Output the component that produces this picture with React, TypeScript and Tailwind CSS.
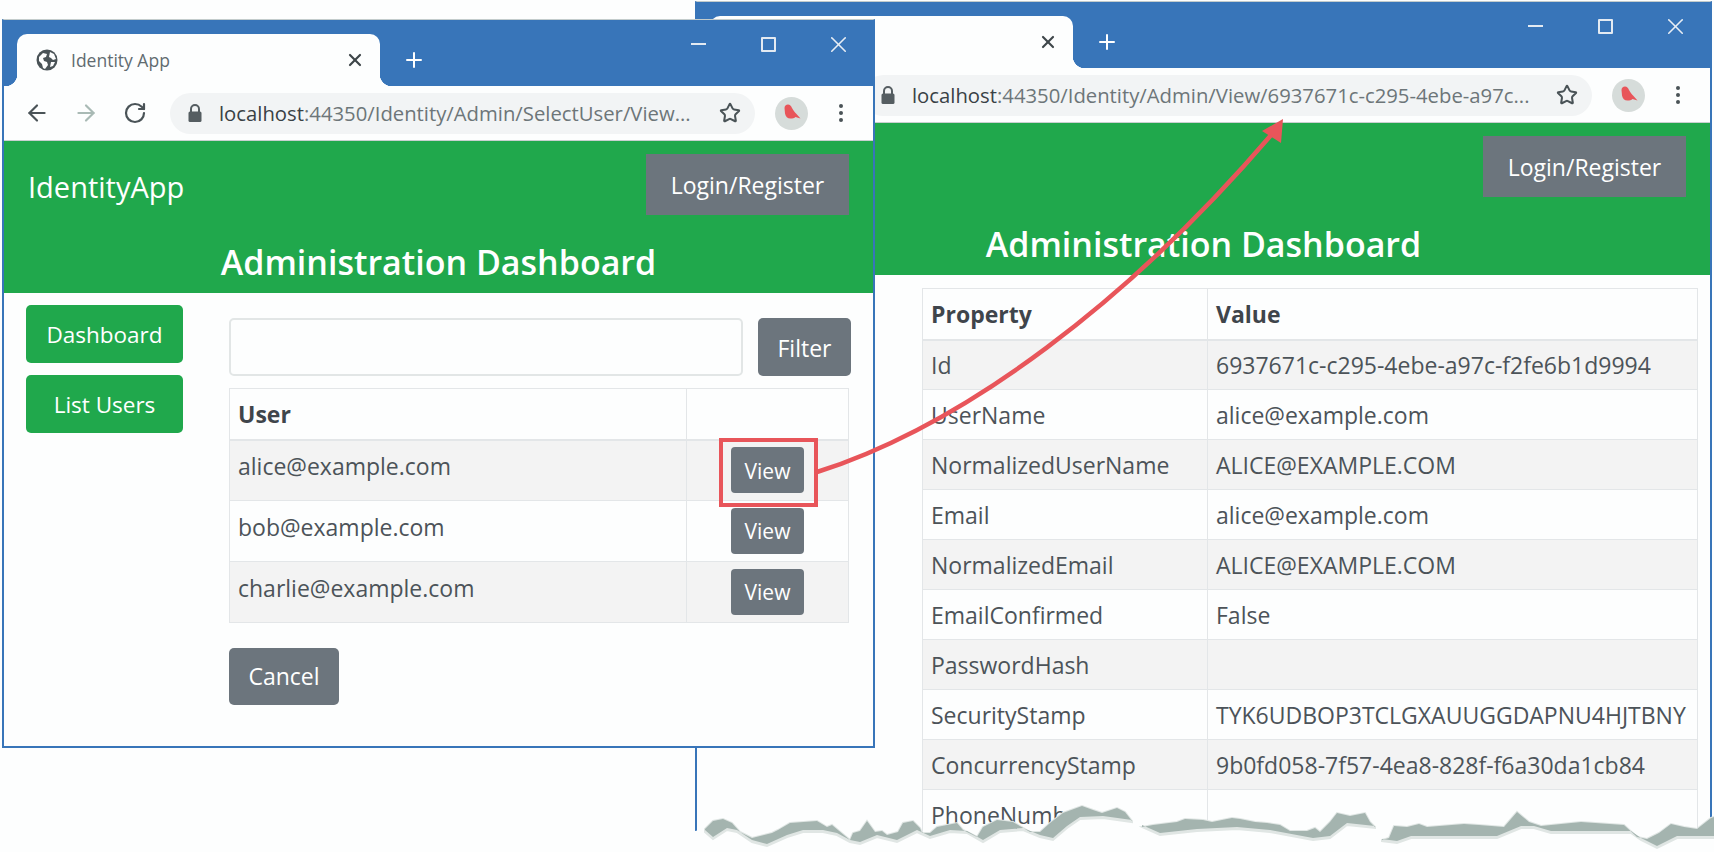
import type { ReactNode } from "react";
import { ArrowLeft, ArrowRight, Plus, RotateCw, Star, X } from "lucide-react";

type Pt = [number, number];

const tornTopA: Pt[] = [[705, 829], [713, 821], [723, 819], [732, 823], [740, 832], [752, 838], [772, 833], [778, 830], [790, 823], [817, 821], [827, 827], [832, 825], [838, 830], [850, 840], [853, 833], [860, 831], [867, 821], [875, 832], [882, 831], [887, 835], [898, 832], [903, 823], [913, 821], [920, 828], [922, 833], [930, 833], [937, 827], [957, 823], [963, 830], [977, 837], [983, 827], [997, 820], [1013, 822], [1030, 832], [1040, 832], [1050, 823], [1063, 813], [1082, 806], [1093, 810], [1102, 813], [1117, 808], [1125, 812], [1132, 821]];
const tornBottomA: Pt[] = [[705, 832], [713, 839], [727, 830], [737, 832], [752, 842], [767, 846], [787, 837], [803, 832], [823, 832], [837, 835], [850, 842], [860, 844], [877, 837], [897, 842], [917, 832], [930, 838], [950, 832], [967, 833], [983, 842], [1000, 832], [1023, 830], [1040, 837], [1053, 840], [1067, 828], [1080, 819], [1103, 818], [1132, 822]];
const tornTopB: Pt[] = [[1142, 827], [1153, 825], [1177, 822], [1185, 819], [1203, 820], [1212, 822], [1232, 818], [1240, 819], [1255, 822], [1267, 823], [1280, 825], [1290, 831], [1307, 831], [1315, 828], [1320, 832], [1330, 822], [1337, 813], [1350, 816], [1365, 813], [1370, 822], [1375, 827]];
const tornBottomB: Pt[] = [[1142, 827], [1160, 835], [1197, 831], [1237, 829], [1270, 832], [1313, 840], [1330, 838], [1347, 825], [1375, 828]];
const tornTopC: Pt[] = [[1382, 840], [1389, 838], [1394, 826], [1407, 827], [1419, 824], [1427, 827], [1464, 824], [1479, 825], [1504, 827], [1517, 812], [1529, 822], [1541, 826], [1581, 822], [1624, 825], [1637, 837], [1647, 839], [1659, 833], [1671, 824], [1684, 827], [1697, 829], [1711, 818], [1714, 817]];
const tornBottomC: Pt[] = [[1382, 841], [1397, 843], [1411, 838], [1447, 838], [1497, 838], [1521, 828], [1534, 828], [1551, 833], [1597, 833], [1631, 833], [1641, 840], [1657, 848], [1677, 838], [1714, 838]];

const toPoints = (pts: Pt[]) => pts.map(([x, y]) => `${x},${y}`).join(" ");
const bandPoints = (top: Pt[], bottom: Pt[], lift: number) =>
  toPoints([...top, ...[...bottom].reverse().map(([x, y]): Pt => [x, y - lift])]);

const propertyRows = [
  ["Id", "6937671c-c295-4ebe-a97c-f2fe6b1d9994"],
  ["UserName", "alice@example.com"],
  ["NormalizedUserName", "ALICE@EXAMPLE.COM"],
  ["Email", "alice@example.com"],
  ["NormalizedEmail", "ALICE@EXAMPLE.COM"],
  ["EmailConfirmed", "False"],
  ["PasswordHash", ""],
  ["SecurityStamp", "TYK6UDBOP3TCLGXAUUGGDAPNU4HJTBNY"],
  ["ConcurrencyStamp", "9b0fd058-7f57-4ea8-828f-f6a30da1cb84"],
  ["PhoneNumber", ""],
];

const users = ["alice@example.com", "bob@example.com", "charlie@example.com"];

function Globe() {
  return (
    <svg width="22" height="22" viewBox="0 0 22 22" className="shrink-0">
      <circle cx="11" cy="11" r="10.5" fill="#4a5357" />
      <path
        d="M3 8l4-4 4 1-1 3-3 1 1 3 3 1 1 3-3 4-2-1-1-4-3-3zM14 3l4 2 2 5-3 1-2-2-2-1zM15 13l4 0-2 4-3 1z"
        fill="#fdfefe"
      />
    </svg>
  );
}

function LockIcon() {
  return (
    <svg width="16" height="20" viewBox="0 0 16 20" className="shrink-0">
      <path d="M4 9V6a4 4 0 0 1 8 0v3" fill="none" stroke="#555d61" strokeWidth="2" />
      <rect x="1.5" y="8.5" width="13" height="10.5" rx="1.5" fill="#555d61" />
    </svg>
  );
}

function Bird() {
  return (
    <svg width="33" height="33" viewBox="0 0 33 33" className="shrink-0">
      <circle cx="16.5" cy="16.5" r="16.5" fill="#d6dcda" />
      <path d="M9.5 11c0-2 1.500-3.500 3.500-3.500 2 0 3 1.500 4 3.500 1 2 3 4.500 4.500 6l4 4.500-5-1.500c-1 1-3 1.500-5 1.500-3 0-5-2-5.500-5z" fill="#e8555a" />
    </svg>
  );
}

function WindowControls() {
  return (
    <div className="ml-auto flex self-start text-[#e8eef5]">
      <div className="flex h-[48px] w-[70px] items-center justify-center">
        <div className="h-[2px] w-[15px] bg-[#e3eaf2]" />
      </div>
      <div className="flex h-[48px] w-[70px] items-center justify-center">
        <div className="h-[15px] w-[15px] rounded-[1px] border-2 border-[#e3eaf2]" />
      </div>
      <div className="flex h-[48px] w-[70px] items-center justify-center">
        <X size={27} strokeWidth={1.4} />
      </div>
    </div>
  );
}

function Chrome({ url, host }: { url: string; host: string }) {
  return (
    <>
      <div className="flex h-[66px] shrink-0 items-end bg-[#3875b9] pl-[13px]">
        <div className="relative flex h-[52px] w-[363px] items-center rounded-t-[10px] bg-[#fdfefe] pl-[19px] pr-[15px]">
          <div className="absolute bottom-0 -left-[12px] h-[12px] w-[12px] bg-[radial-gradient(circle_at_0_0,#3875b9_12px,#fdfefe_12.5px)]" />
          <div className="absolute bottom-0 -right-[12px] h-[12px] w-[12px] bg-[radial-gradient(circle_at_100%_0,#3875b9_12px,#fdfefe_12.5px)]" />
          <Globe />
          <span className="ml-[13px] text-[17.500px] text-[#616b70]">Identity App</span>
          <X size={20} strokeWidth={2.6} className="ml-auto text-[#3e4649]" />
        </div>
        <Plus size={24} strokeWidth={2} className="mb-[14px] ml-[22px] text-white" />
        <WindowControls />
      </div>
      <div className="flex h-[55px] shrink-0 items-center border-b border-[#c9d0d0] bg-[#fdfefe] pl-[8px]">
        <div className="flex w-[49px] justify-center text-[#4a5357]">
          <ArrowLeft size={26} strokeWidth={2} />
        </div>
        <div className="flex w-[49px] justify-center text-[#a9bab5]">
          <ArrowRight size={26} strokeWidth={2} />
        </div>
        <div className="flex w-[49px] justify-center text-[#4a5357]">
          <RotateCw size={24} strokeWidth={2.2} />
        </div>
        <div className="ml-[11px] flex h-[41px] min-w-0 flex-1 items-center rounded-full bg-[#f2f4f5] pl-[17px] pr-[14px]">
          <LockIcon />
          <span className="ml-[16px] min-w-0 flex-1 truncate whitespace-nowrap text-[20.300px] text-[#6d7679]">
            <span className="text-[#394145]">{host}</span>
            {url}
          </span>
          <Star size={22} strokeWidth={2.2} className="ml-[10px] shrink-0 text-[#4a5357]" />
        </div>
        <div className="ml-[20px] shrink-0">
          <Bird />
        </div>
        <div className="ml-[31px] mr-[30px] flex shrink-0 flex-col gap-[3px]">
          <div className="h-[4px] w-[4px] rounded-full bg-[#4a5357]" />
          <div className="h-[4px] w-[4px] rounded-full bg-[#4a5357]" />
          <div className="h-[4px] w-[4px] rounded-full bg-[#4a5357]" />
        </div>
      </div>
    </>
  );
}

function AppHeader({ brand }: { brand?: string }) {
  return (
    <div className="h-[152px] shrink-0 bg-[#20a84c] pt-[13px] text-white">
      <div className="flex items-center justify-between pl-[24px] pr-[24px]">
        <span className="mt-[3px] text-[29px] leading-none">{brand}</span>
        <div className="flex h-[61px] w-[203px] items-center justify-center bg-[#6c757d] pt-[2px] text-[23px]">
          Login/Register
        </div>
      </div>
      <h1 className="mt-[18px] text-center text-[34px] font-semibold leading-[58px]">
        Administration Dashboard
      </h1>
    </div>
  );
}

function BrowserWindow({
  className,
  url,
  host,
  brand,
  children,
}: {
  className: string;
  url: string;
  host: string;
  brand?: string;
  children: ReactNode;
}) {
  return (
    <div
      className={`absolute flex flex-col overflow-hidden border-x-2 border-b-2 border-t border-[#3875b9] border-t-[#c3cccc] bg-[#fdfefe] ${className}`}
    >
      <Chrome url={url} host={host} />
      <AppHeader brand={brand} />
      {children}
    </div>
  );
}

function SelectUserBody() {
  return (
    <div className="flex">
      <div className="ml-[22px] mt-[12px] flex w-[157px] shrink-0 flex-col gap-[12px]">
        <div className="flex h-[58px] items-center justify-center rounded-[5px] bg-[#20a84c] pt-[2px] text-[22.500px] text-white">
          Dashboard
        </div>
        <div className="flex h-[58px] items-center justify-center rounded-[5px] bg-[#20a84c] pt-[2px] text-[22.500px] text-white">
          List Users
        </div>
      </div>
      <div className="ml-[46px] mt-[25px] w-[622px] shrink-0">
        <div className="flex gap-[15px]">
          <div className="h-[58px] w-[514px] rounded-[5px] border-2 border-[#e2e6e6] bg-[#fdfefe]" />
          <div className="flex h-[58px] w-[93px] items-center justify-center rounded-[5px] bg-[#6c757d] pt-[2px] text-[23px] text-white">
            Filter
          </div>
        </div>
        <table className="mt-[12px] w-[620px] table-fixed border-collapse text-[23px] text-[#4c5359]">
          <colgroup>
            <col className="w-[457px]" />
            <col />
          </colgroup>
          <thead>
            <tr className="h-[51px] border-b-2 border-[#dfe3e5]">
              <th className="border border-b-2 border-[#e3e6e8] px-[8px] pt-[1px] text-left font-bold text-[#3f454b]">
                User
              </th>
              <th className="border border-b-2 border-[#e3e6e8]" />
            </tr>
          </thead>
          <tbody>
            {users.map((user, i) => (
              <tr key={user} className={i % 2 === 0 ? "h-[61px] bg-[#f3f3f3]" : "h-[61px]"}>
                <td className="border border-[#e3e6e8] px-[8px] pb-[8px]">{user}</td>
                <td className="border border-[#e3e6e8] text-center">
                  <div className="ml-[44px] flex h-[46px] w-[73px] items-center justify-center rounded-[4px] bg-[#6c757d] pt-[2px] text-[21px] text-white">
                    View
                  </div>
                </td>
              </tr>
            ))}
          </tbody>
        </table>
        <div className="mt-[25px] flex h-[57px] w-[110px] items-center justify-center rounded-[5px] bg-[#6c757d] text-[23px] text-white">
          Cancel
        </div>
      </div>
    </div>
  );
}

function PropertiesBody() {
  return (
    <div className="px-[225px] pt-[13px] pr-[12px]">
      <table className="w-[776px] table-fixed border-collapse text-[23px] text-[#4c5359]">
        <colgroup>
          <col className="w-[285px]" />
          <col />
        </colgroup>
        <thead>
          <tr className="h-[51px]">
            <th className="border border-b-2 border-[#e3e6e8] px-[8px] pt-[1px] text-left font-bold text-[#3f454b]">
              Property
            </th>
            <th className="border border-b-2 border-[#e3e6e8] px-[8px] pt-[1px] text-left font-bold text-[#3f454b]">
              Value
            </th>
          </tr>
        </thead>
        <tbody>
          {propertyRows.map(([name, value], i) => (
            <tr key={name} className={i % 2 === 0 ? "h-[50px] bg-[#f3f3f3]" : "h-[50px]"}>
              <td className="border border-[#e3e6e8] px-[8px] pt-[1px]">{name}</td>
              <td className="whitespace-nowrap border border-[#e3e6e8] px-[8px] pt-[1px]">{value}</td>
            </tr>
          ))}
        </tbody>
      </table>
    </div>
  );
}

function Annotations() {
  return (
    <svg width="1714" height="852" viewBox="0 0 1714 852" className="absolute inset-0">
      <rect x="721" y="440" width="95" height="65" fill="none" stroke="#e8555a" strokeWidth="4" />
      <path d="M817 472C965 425 1130 300 1272 134" fill="none" stroke="#e8555a" strokeWidth="4.5" />
      <polygon points="1283,119 1262,131 1281,143" fill="#e8555a" />
      {/* the tear cuts the last label off at "PhoneNumb" */}
      <polygon points="1063,797 1135,797 1135,825 1063,825" fill="#fdfefe" />
      <polygon
        points={`690,832 ${toPoints(tornTopA)} ${toPoints(tornTopB)} ${toPoints(tornTopC)} 1714,852 690,852`}
        fill="#fdfefe"
      />
      <polygon points={bandPoints(tornTopA, tornBottomA, 0)} fill="#e0e6e4" stroke="#e0e6e4" strokeWidth="2" />
      <polygon points={bandPoints(tornTopB, tornBottomB, 0)} fill="#e0e6e4" stroke="#e0e6e4" strokeWidth="2" />
      <polygon points={bandPoints(tornTopC, tornBottomC, 0)} fill="#e0e6e4" stroke="#e0e6e4" strokeWidth="2" />
      <polygon points={bandPoints(tornTopA, tornBottomA, 2)} fill="#a4b4af" />
      <polygon points={bandPoints(tornTopB, tornBottomB, 2)} fill="#a4b4af" />
      <polygon points={bandPoints(tornTopC, tornBottomC, 2)} fill="#a4b4af" />
    </svg>
  );
}

export default function App() {
  return (
    <div className="relative h-[852px] w-[1714px] overflow-hidden bg-[#fdfefe] font-['Open_Sans',sans-serif]">
      <BrowserWindow
        className="left-[695px] top-[1px] h-[860px] w-[1017px]"
        host="localhost"
        url=":44350/Identity/Admin/View/6937671c-c295-4ebe-a97c..."
      >
        <PropertiesBody />
      </BrowserWindow>
      <BrowserWindow
        className="left-[2px] top-[19px] h-[729px] w-[873px]"
        host="localhost"
        url=":44350/Identity/Admin/SelectUser/View..."
        brand="IdentityApp"
      >
        <SelectUserBody />
      </BrowserWindow>
      <Annotations />
    </div>
  );
}
